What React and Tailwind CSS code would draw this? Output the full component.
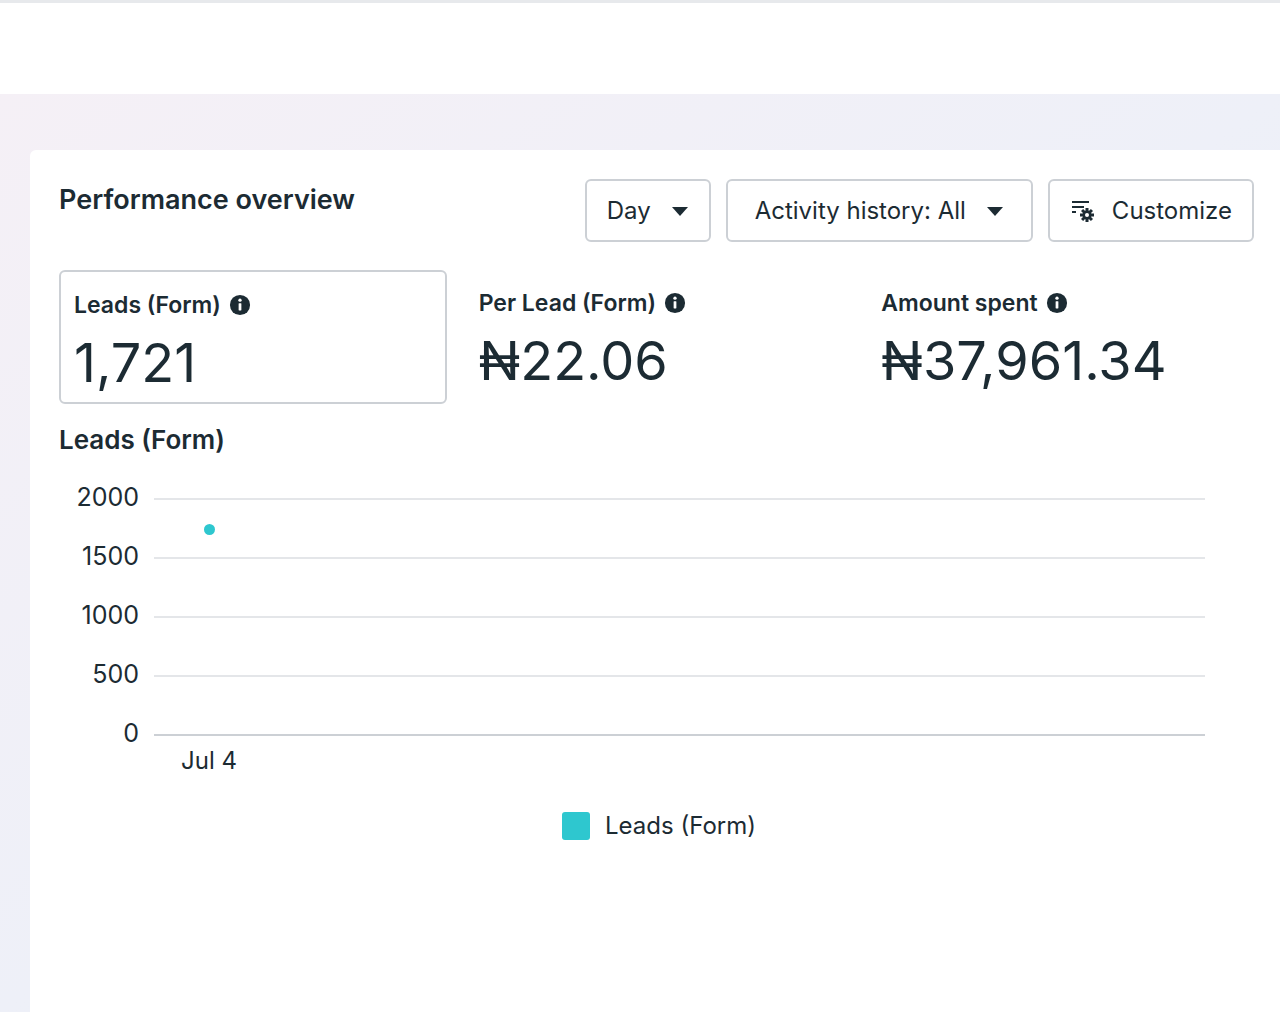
import React from "react";

const Info = () => (
  <svg width="22" height="22" viewBox="0 0 24 24" className="inline-block">
    <circle cx="12" cy="12" r="11" fill="#1c2b33" />
    <rect x="10.5" y="10" width="3" height="8" rx="0.5" fill="#fff" />
    <circle cx="12" cy="6.7" r="1.8" fill="#fff" />
  </svg>
);
const Caret = () => (
  <svg width="18" height="12" viewBox="0 0 18 12"><path d="M1 2h16L9 11z" fill="#1c2b33" /></svg>
);

export default function App() {
  const grid = [2000, 1500, 1000, 500, 0];
  return (
    <div className="w-[1280px] h-[1012px] overflow-hidden text-[#1c2b33]" style={{ fontFamily: "Inter, 'Noto Sans', sans-serif" }}>
      <div className="h-[94px] bg-white border-t-[3px] border-[#e7e9ec]" />
      <div className="h-[918px] bg-gradient-to-br from-[#f5f0f6] via-[#eef0f8] to-[#e6eef9] pt-[56px] pl-[30px]">
        <div className="bg-white h-full rounded-tl-md pl-[29px] pr-[26px] pt-[28px]">
          <div className="flex items-start justify-between">
            <div className="text-[27px] font-semibold mt-[2px]">Performance overview</div>
            <div className="flex gap-[15px] mt-[1px]">
              <button className="h-[63px] px-[20px] border-2 border-[#ccd0d5] rounded-md flex items-center gap-[20px] text-[24px]">Day <Caret /></button>
              <button className="h-[63px] px-[27px] border-2 border-[#ccd0d5] rounded-md flex items-center gap-[20px] text-[24px]">Activity history: All <Caret /></button>
              <button className="h-[63px] px-[20px] border-2 border-[#ccd0d5] rounded-md flex items-center gap-[14px] text-[24px]">
                <svg width="28" height="28" viewBox="0 0 28 28" fill="#1c2b33">
                  <rect x="2" y="4" width="17" height="2" />
                  <rect x="2" y="9" width="12" height="2" />
                  <rect x="2" y="14" width="4" height="2" />
                  <g transform="translate(17 18)">
                    <circle r="4.5" />
                    {[0, 45, 90, 135].map(a => <rect key={a} x="-1.5" y="-7" width="3" height="14" transform={`rotate(${a})`} />)}
                    <circle r="2" fill="#fff" />
                  </g>
                </svg>
                Customize
              </button>
            </div>
          </div>
          <div className="grid grid-cols-3 mt-[28px] w-[1208px]">
            {[["Leads (Form)", "1,721"], ["Per Lead (Form)", "₦22.06"], ["Amount spent", "₦37,961.34"]].map(([l, v], i) => (
              <div key={i} className={`h-[134px] pl-[13px] pt-[16px] ${i === 0 ? "border-2 border-[#ccd0d5] rounded-md w-[388px]" : "pl-[17px]"}`}>
                <div className="flex items-center gap-[8px] text-[23px] font-semibold">{l} <Info /></div>
                <div className="text-[54px] leading-none mt-[13px]">{v}</div>
              </div>
            ))}
          </div>
          <div className="text-[26px] font-semibold mt-[16px]">Leads (Form)</div>
          <div className="relative mt-[27px] w-[1146px] h-[300px]">
            {grid.map((g, i) => (
              <div key={g} className="absolute left-0 right-0 flex items-center" style={{ top: i * 59 }}>
                <div className="w-[80px] text-right text-[25px] leading-none -translate-y-[1px]">{g}</div>
                <div className={`ml-[15px] flex-1 h-[2px] ${i === 4 ? "bg-[#ccd0d5]" : "bg-[#e4e6e9]"}`} />
              </div>
            ))}
            <div className="absolute w-[11px] h-[11px] rounded-full bg-[#2ec7cf]" style={{ left: 145, top: 38 }} />
            <div className="absolute text-[24px]" style={{ left: 122, top: 257 }}>Jul 4</div>
          </div>
          <div className="flex items-center justify-center gap-[15px] ml-[-60px] mt-[22px] w-[1300px] text-[24px]">
            <div className="w-[28px] h-[28px] rounded-[3px] bg-[#2ec7cf]" />
            <span className="mr-[-20px]">Leads (Form)</span>
          </div>
        </div>
      </div>
    </div>
  );
}
